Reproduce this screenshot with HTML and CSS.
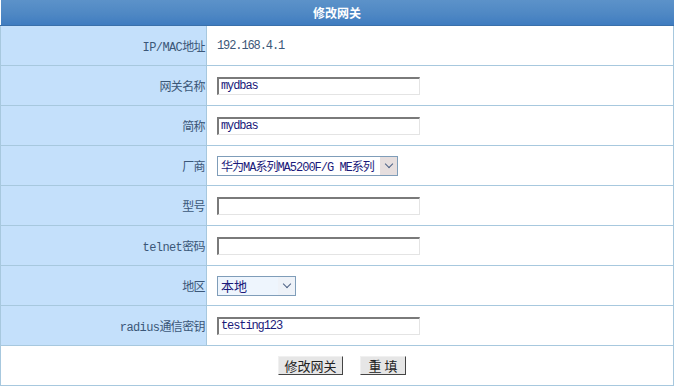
FILE: index.html
```html
<!DOCTYPE html>
<html lang="zh-CN">
    <head>
        <meta charset="UTF-8">
        <title>修改网关</title>
        <link rel="stylesheet" href="styles.css">
    </head>
    <body>
        <form id="gateway_form">
            <table class="edit_table">
                <tr>
                    <th colspan="2" class="title">修改网关</th>
                </tr>
                <tr>
                    <td class="label">IP/MAC地址</td>
                    <td class="value">192.168.4.1</td>
                </tr>
                <tr>
                    <td class="label">网关名称</td>
                    <td class="value"><input type="text" class="txt" value="mydbas"/></td>
                </tr>
                <tr>
                    <td class="label">简称</td>
                    <td class="value"><input type="text" class="txt" value="mydbas"/></td>
                </tr>
                <tr>
                    <td class="label">厂商</td>
                    <td class="value">
                        <div class="sel sel_wide"><span>华为MA系列MA5200F/G ME系列</span><i class="arrow"></i></div>
                    </td>
                </tr>
                <tr>
                    <td class="label">型号</td>
                    <td class="value"><input type="text" class="txt"/></td>
                </tr>
                <tr>
                    <td class="label">telnet密码</td>
                    <td class="value"><input type="password" class="txt"/></td>
                </tr>
                <tr>
                    <td class="label">地区</td>
                    <td class="value">
                        <div class="sel sel_small"><span>本地</span><i class="arrow"></i></div>
                    </td>
                </tr>
                <tr>
                    <td class="label">radius通信密钥</td>
                    <td class="value"><input type="text" class="txt" value="testing123"/></td>
                </tr>
                <tr>
                    <td colspan="2" class="buttons">
                        <div class="btn_row">
                            <input type="button" class="btn" value="修改网关"/>
                            <input type="reset" class="btn btn_reset" value="重 填"/>
                        </div>
                    </td>
                </tr>
            </table>
        </form>
    </body>
</html>
```
FILE: styles.css
```css
body{
    margin:0;
    background:#fff;
    font-family:"Liberation Mono","Noto Sans CJK SC",monospace;
    font-size:12px;
}
.edit_table{
    width:674px;
    border-collapse:collapse;
}
.edit_table td{
    border:1px solid #a7c8de;
    height:39px;
    padding:0;
}
.title{
    height:25px;
    padding:0;
    color:#fff;
    font-weight:bold;
    font-size:12px;
    font-family:"Noto Sans CJK SC",sans-serif;
    background:linear-gradient(#5c92c9,#4f88c4 55%,#3f7cc0);
    border-bottom:1px solid #3a70aa;
}
.label{
    width:204px;
    text-align:right;
    background:#c4e0fb;
    color:#3b5778;
    padding-right:1px !important;
    letter-spacing:-0.6px;
}
.value{
    background:#fff;
    color:#3b5778;
    padding-left:10px !important;
    letter-spacing:-1.1px;
}
.txt{
    box-sizing:border-box;
    width:203px;
    height:18px;
    margin:0;
    padding:0 2px;
    border:1px solid;
    border-color:#7a7a7a #e4e4e4 #e4e4e4 #7a7a7a;
    border-top-width:2px;
    border-left-width:2px;
    color:#1a1a7a;
    font-family:"Liberation Mono","Noto Sans CJK SC",monospace;
    font-size:12px;
    letter-spacing:-1.1px;
    outline:none;
}
.sel{
    box-sizing:border-box;
    height:20px;
    border:1px solid #7f9db9;
    display:flex;
    align-items:center;
    justify-content:space-between;
    padding-left:3px;
    color:#1a1a7a;
    font-size:12px;
    background:#fff;
    white-space:nowrap;
    overflow:hidden;
}
.sel_wide{
    width:181px;
    letter-spacing:-1px;
}
.sel_small{
    width:79px;
    background:#eef5fd;
    font-size:13px;
    letter-spacing:0;
}
.arrow{
    flex:none;
    width:17px;
    height:18px;
    display:flex;
    align-items:center;
    justify-content:center;
    background:#eef2f8;
}
.arrow::after{
    content:"";
    width:5px;
    height:5px;
    border-right:1px solid #4d6185;
    border-bottom:1px solid #4d6185;
    transform:rotate(45deg);
    margin-top:-4px;
}
.sel_wide .arrow{
    background:#e6dede;
}
.buttons{
    height:39px;
}
.btn_row{
    display:flex;
    justify-content:center;
    gap:17px;
    padding-left:10px;
}
.btn{
    box-sizing:border-box;
    width:65px;
    height:19px;
    padding:0;
    margin:0;
    border:1px solid;
    border-color:#f0f0f0 #444 #444 #f0f0f0;
    background:#e6e6e6;
    color:#222;
    font-family:"Noto Sans CJK SC",sans-serif;
    font-size:13px;
    line-height:15px;
}
.btn_reset{
    width:46px;
}
```
